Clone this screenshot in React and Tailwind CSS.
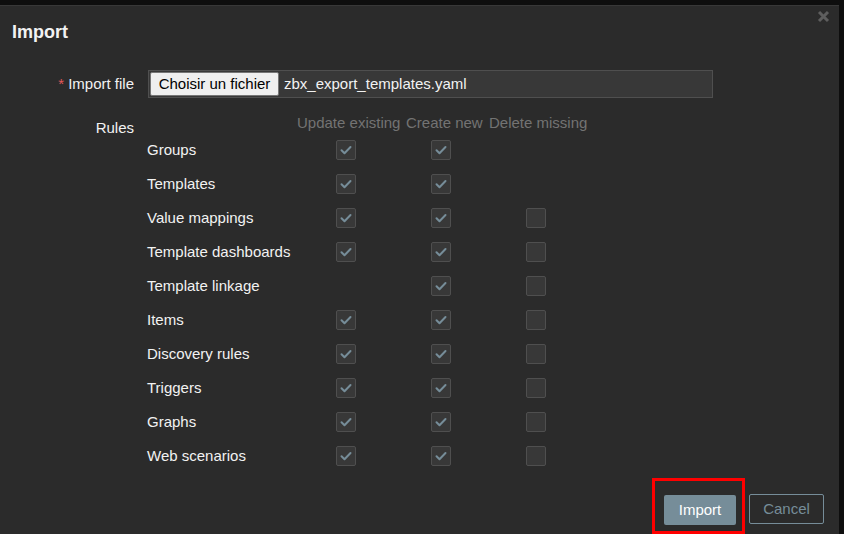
import { useState } from "react"

const rules = [
    { name: "Groups", update: true, create: true, del: null },
    { name: "Templates", update: true, create: true, del: null },
    { name: "Value mappings", update: true, create: true, del: false },
    { name: "Template dashboards", update: true, create: true, del: false },
    { name: "Template linkage", update: null, create: true, del: false },
    { name: "Items", update: true, create: true, del: false },
    { name: "Discovery rules", update: true, create: true, del: false },
    { name: "Triggers", update: true, create: true, del: false },
    { name: "Graphs", update: true, create: true, del: false },
    { name: "Web scenarios", update: true, create: true, del: false },
]

function Checkbox({ checked }) {
    return (
        <span className="w-[20px] h-[20px] rounded-[2px] border border-[#4f4f4f] bg-[#383838] flex items-center justify-center">
            {checked && (
                <svg width="14" height="14" viewBox="0 0 14 14" fill="none">
                    <path d="M2.5 7.2l3 3 6-6.2" stroke="#768d99" strokeWidth="2" strokeLinecap="round" strokeLinejoin="round" />
                </svg>
            )}
        </span>
    )
}

export default function App() {
    const [data] = useState(rules)

    return (
        <div className="w-[844px] h-[534px] bg-[#0e0e0e] overflow-hidden flex" style={{ fontFamily: '"Liberation Sans", Arial, sans-serif' }}>
            <div className="w-[839px] mt-[5px] bg-[#2b2b2b] border-t border-[#383838] flex flex-col relative">
                {/* Header */}
                <div className="flex items-center h-[52px] pl-[12px] pb-[1px]">
                    <h1 className="text-[18px] font-bold text-[#f2f2f2] leading-none">Import</h1>
                </div>
                <button className="absolute right-[9px] top-[4px]">
                    <svg width="13" height="13" viewBox="0 0 13 13">
                        <path d="M2 2l9 9M11 2l-9 9" stroke="#5e5e5e" strokeWidth="3" />
                    </svg>
                </button>

                {/* Import file */}
                <div className="flex items-center mt-[12px]">
                    <div className="w-[134px] text-right text-[15px] text-[#f2f2f2]">
                        <span className="text-[#e45959] mr-[4px]">*</span>Import file
                    </div>
                    <div className="ml-[14px] w-[565px] h-[28px] border border-[#4f4f4f] bg-[#383838] flex items-center pl-[1px]">
                        <span className="h-[24px] w-[129px] bg-[#efefef] border border-[#767676] rounded-[2px] text-[15px] text-black flex items-center justify-center">
                            Choisir un fichier
                        </span>
                        <span className="ml-[5px] text-[15px] text-[#f2f2f2]">zbx_export_templates.yaml</span>
                    </div>
                </div>

                {/* Rules */}
                <div className="flex mt-[13px]">
                    <div className="w-[134px] text-right text-[15px] text-[#f2f2f2] pt-[6px]">Rules</div>
                    <div className="ml-[13px] grid grid-cols-[147px_109px_83px_104px] text-[15px]">
                        <div className="h-[22px]" />
                        <div className="h-[22px] pt-[2px] px-[3px] text-[#737373] whitespace-nowrap flex items-center">Update existing</div>
                        <div className="h-[22px] pt-[2px] px-[3px] text-[#737373] whitespace-nowrap flex items-center">Create new</div>
                        <div className="h-[22px] pt-[2px] px-[3px] text-[#737373] whitespace-nowrap flex items-center">Delete missing</div>
                        {data.map((r) => (
                            <div key={r.name} className="contents">
                                <div className="h-[34px] flex items-center text-[#f2f2f2] whitespace-nowrap">{r.name}</div>
                                <div className="h-[34px] flex items-center justify-center pr-[5px]">
                                    {r.update !== null && <Checkbox checked={r.update} />}
                                </div>
                                <div className="h-[34px] flex items-center justify-center pr-[7px]">
                                    {r.create !== null && <Checkbox checked={r.create} />}
                                </div>
                                <div className="h-[34px] flex items-center justify-center pr-[4px]">
                                    {r.del !== null && <Checkbox checked={r.del} />}
                                </div>
                            </div>
                        ))}
                    </div>
                </div>

                {/* Footer */}
                <div className="mt-auto flex justify-end items-end pr-[15px] pb-[10px]">
                    <div className="border-[3px] border-[#ff0000] pl-[9px] pr-[6px] pt-[14px] pb-[6px] -mb-[10px]">
                        <button className="w-[72px] h-[30px] bg-[#768d99] rounded-[2px] text-white text-[15px]">Import</button>
                    </div>
                    <button className="ml-[4px] w-[75px] h-[30px] border border-[#768d99] rounded-[2px] text-[#768d99] text-[15px]">Cancel</button>
                </div>
            </div>
        </div>
    )
}
